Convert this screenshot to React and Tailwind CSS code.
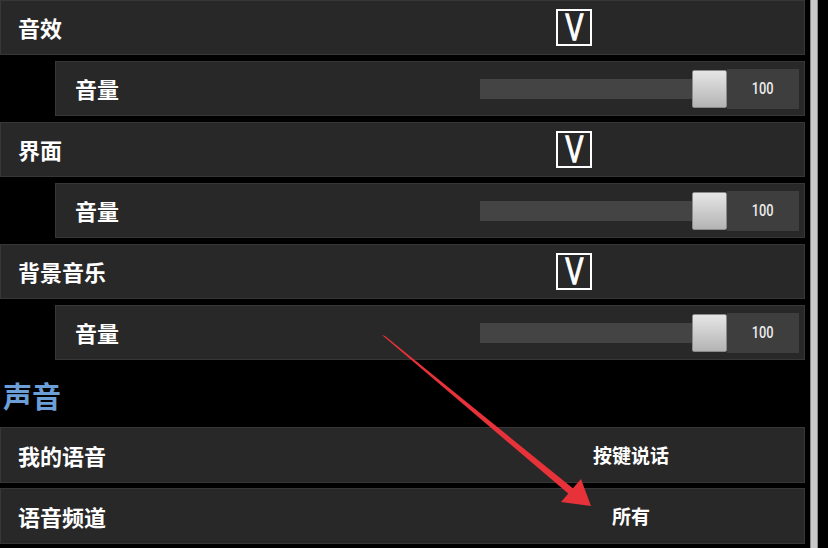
import React from 'react';

const cjk = { fontFamily: '"Noto Sans CJK SC", "Noto Sans", sans-serif' };

function ToggleRow({ label }) {
  return (
    <div className="flex h-[55px] items-center border border-[#373737] bg-[#282828]">
      <div className="w-[555px] pl-[17px] text-[22px] font-bold text-white" style={cjk}>
        {label}
      </div>
      <div className="flex h-[37px] w-[36px] items-center justify-center border-2 border-white">
        <span
          className="scale-x-[0.72] text-[37px] leading-none font-normal text-white [-webkit-text-stroke:1.3px_white]"
          style={{ fontFamily: '"Liberation Sans", sans-serif' }}
        >
          V
        </span>
      </div>
    </div>
  );
}

function VolumeRow({ value }) {
  return (
    <div className="ml-[55px] flex h-[55px] items-center border border-[#373737] bg-[#282828]">
      <div className="w-[424px] pl-[19px] text-[22px] font-bold text-white" style={cjk}>
        音量
      </div>
      <div className="flex items-center">
        <div className="h-[20px] w-[212px] bg-[#444444]" />
        <div className="h-[38px] w-[35px] rounded-[2px] border border-[#8a8a8a] bg-gradient-to-b from-[#e6e6e6] to-[#b4b4b4]" />
        <div className="flex h-[40px] w-[72px] items-center justify-center bg-[#3e3e3e]">
          <span
            className="scale-x-[0.8] text-[16px] font-medium text-[#ececec]"
            style={{ fontFamily: 'Roboto, sans-serif' }}
          >
            {value}
          </span>
        </div>
      </div>
    </div>
  );
}

function ValueRow({ label, value }) {
  return (
    <div className="flex h-[56px] items-center border border-[#373737] bg-[#282828]">
      <div className="w-[560px] pl-[17px] text-[22px] font-bold text-white" style={cjk}>
        {label}
      </div>
      <div className="w-[140px] text-center text-[19px] font-bold text-white" style={cjk}>
        {value}
      </div>
    </div>
  );
}

export default function App() {
  return (
    <div className="relative h-[548px] w-[828px] overflow-hidden bg-black">
      <div className="flex h-full">
        <div className="w-[805px]">
          <div className="flex flex-col gap-[6px]">
            <ToggleRow label="音效" />
            <VolumeRow value="100" />
            <ToggleRow label="界面" />
            <VolumeRow value="100" />
            <ToggleRow label="背景音乐" />
            <VolumeRow value="100" />
          </div>
          <div className="flex h-[67px] items-center pl-[3px] pt-[4px] text-[29px] font-bold text-[#6c9fd8]" style={cjk}>
            声音
          </div>
          <div className="flex flex-col gap-[5px]">
            <ValueRow label="我的语音" value="按键说话" />
            <ValueRow label="语音频道" value="所有" />
          </div>
        </div>
        <div className="ml-[5px] h-full w-[8px] border-x border-[#8c8c8c] bg-[#c8c8c8]" />
      </div>

      {/* red annotation arrow */}
      <svg className="pointer-events-none absolute inset-0" width="828" height="548" viewBox="0 0 828 548">
        <polygon points="382,335 385,336 575,490 570,495" fill="#e8323a" />
        <polygon points="591,506 561,502 581,479" fill="#e8323a" />
      </svg>
    </div>
  );
}
